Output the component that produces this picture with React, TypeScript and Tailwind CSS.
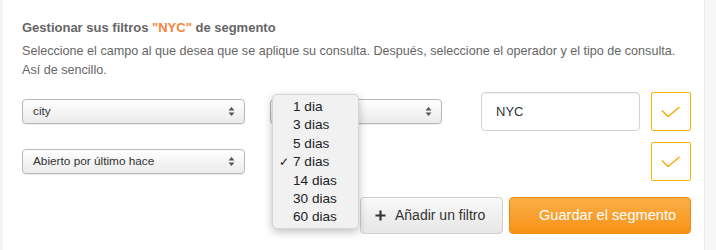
import React from "react";

const font = { fontFamily: '"Liberation Sans", Arial, sans-serif' };

function Arrows() {
  return (
    <svg width="7" height="11" viewBox="0 0 7 11" className="shrink-0">
      <path d="M3.5 1 L6.5 4.5 L0.5 4.5 Z" fill="#555" />
      <path d="M3.5 10 L6.5 6.5 L0.5 6.5 Z" fill="#555" />
    </svg>
  );
}

function FakeSelect({ label, width }: { label: string; width: string }) {
  return (
    <div
      className={`${width} h-[25px] flex items-center justify-between pl-[10px] pr-[9px] rounded-[4px] border border-[#b9b9b9] bg-gradient-to-b from-white to-[#ebebeb] shadow-[0_1px_1px_rgba(0,0,0,0.08)] text-[11.8px] text-[#333]`}
    >
      <span>{label}</span>
      <Arrows />
    </div>
  );
}

function CheckBox() {
  return (
    <div className="w-[40px] h-[39px] border border-[#f7b500] rounded-[2px] bg-white flex items-center justify-center">
      <svg width="20" height="12" viewBox="0 0 20 12">
        <path d="M1 4.5 L7 10.5 L18.5 1" fill="none" stroke="#f5a800" strokeWidth="1.3" />
      </svg>
    </div>
  );
}

const days = ["1 dia", "3 dias", "5 dias", "7 dias", "14 dias", "30 dias", "60 dias"];

export default function App() {
  return (
    <div className="w-[716px] h-[250px] flex bg-white overflow-hidden" style={font}>
      <div className="w-[3px] bg-[#f4f4f4]" />
      <div className="w-[701px] pl-[19px] pt-[19px]">
        <h1 className="text-[13px] font-bold text-[#666] leading-[18px]">
          Gestionar sus filtros <span className="text-[#f5843c]">"NYC"</span> de segmento
        </h1>
        <p className="mt-[5px] text-[12.6px] text-[#666] leading-[19px]">
          Seleccione el campo al que desea que se aplique su consulta. Después, seleccione el operador y el tipo de consulta.
          <br />
          Así de sencillo.
        </p>

        <div className="mt-[12px] flex items-center h-[39px]">
          <FakeSelect label="city" width="w-[223px]" />
          <div className="relative ml-[25px]">
            <FakeSelect label="" width="w-[172px]" />
            <div className="absolute left-[2px] top-[-5px] w-[87px] h-[135px] rounded-[5px] bg-[#f1f1f1] border border-[#d6d6d6] shadow-[0_3px_8px_rgba(0,0,0,0.25)] pt-[3px] z-10">
              {days.map((d) => (
                <div key={d} className="relative h-[18.4px] pl-[20px] text-[13.6px] text-[#222] leading-[18.4px]">
                  {d === "7 dias" && (
                    <span className="absolute left-[6px] top-0 text-[12px]">✓</span>
                  )}
                  {d}
                </div>
              ))}
            </div>
          </div>
          <div className="ml-[39px] w-[159px] h-[39px] rounded-[4px] border border-[#d2d2d2] bg-white flex items-center pl-[14px] text-[13px] text-[#333] shadow-[inset_0_1px_2px_rgba(0,0,0,0.06)]">
            NYC
          </div>
          <div className="ml-[11px]">
            <CheckBox />
          </div>
        </div>

        <div className="mt-[11px] flex items-center h-[39px]">
          <FakeSelect label="Abierto por último hace" width="w-[223px]" />
          <div className="ml-auto mr-[13px]">
            <CheckBox />
          </div>
        </div>

        <div className="mt-[16px] flex justify-end gap-[6px] pr-[13px]">
          <div className="w-[143px] h-[37px] rounded-[4px] border border-[#cfcfcf] bg-gradient-to-b from-[#fafafa] to-[#e6e6e6] flex items-center pl-[14px] text-[14px] text-[#333]">
            <svg width="11" height="11" viewBox="0 0 11 11" className="mr-[9px]">
              <path d="M5.5 0.5 V10.5 M0.5 5.5 H10.5" stroke="#333" strokeWidth="2.2" />
            </svg>
            Añadir un filtro
          </div>
          <div className="w-[182px] h-[37px] rounded-[4px] border border-[#ee8c16] bg-gradient-to-b from-[#fbae45] to-[#f7920f] flex items-center pl-[29px] text-[14.6px] text-white">
            Guardar el segmento
          </div>
        </div>
      </div>
      <div className="w-[12px] bg-[#f6f6f6] border-l border-[#ececec]" />
    </div>
  );
}
